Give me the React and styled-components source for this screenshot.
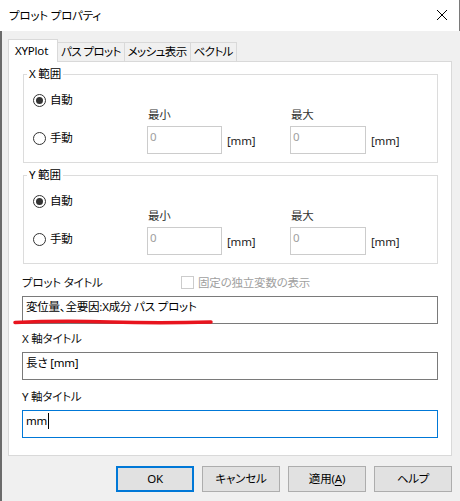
import styled, { createGlobalStyle } from 'styled-components';

const GlobalStyle = createGlobalStyle`
    html, body {
        margin: 0;
        padding: 0;
        background: #f0f0f0;
    }
    body {
        font-family: "Noto Sans", "Noto Sans CJK JP", sans-serif;
        font-size: 11.5px;
        letter-spacing: -0.2px;
        color: #000;
        font-feature-settings: "palt";
    }
    * {
        box-sizing: border-box;
    }
`;

const tabs = ['XYPlot', 'パス プロット', 'メッシュ表示', 'ベクトル'];
const buttons = [
    { label: 'OK', primary: true },
    { label: 'キャンセル' },
    { label: <>適用(<u>A</u>)</> },
    { label: 'ヘルプ' },
];

const Radio = ({ checked, children }) => (
    <RadioOption>
        <RadioCircle $checked={checked} />
        {children}
    </RadioOption>
);

const RangeGroup = ({ title }) => (
    <Group>
        <Legend>{title}</Legend>
        <RangeGrid>
            <Radio checked>自動</Radio>
            <MinMaxLabel $col={2}>最小</MinMaxLabel>
            <MinMaxLabel $col={4}>最大</MinMaxLabel>
            <ManualCell>
                <Radio>手動</Radio>
            </ManualCell>
            <NumberBox>0</NumberBox>
            <Unit>[mm]</Unit>
            <NumberBox>0</NumberBox>
            <Unit>[mm]</Unit>
        </RangeGrid>
    </Group>
);

const App = () => {
    return (
        <Window>
            <GlobalStyle />
            <TitleBar>
                <Title>プロット プロパティ</Title>
                <CloseButton>
                    <svg width="12" height="12" viewBox="0 0 12 12">
                        <path d="M1 1 L11 11 M11 1 L1 11" stroke="#000" strokeWidth="1" />
                    </svg>
                </CloseButton>
            </TitleBar>
            <Body>
                <TabStrip>
                    {tabs.map((t, i) => (
                        <Tab key={t} $active={i === 0}>{t}</Tab>
                    ))}
                </TabStrip>
                <Panel>
                    <RangeGroup title="X 範囲" />
                    <RangeGroup title="Y 範囲" />
                    <LabelRow>
                        <FieldLabel $wide>プロット タイトル</FieldLabel>
                        <CheckOption>
                            <CheckBox />
                            固定の独立変数の表示
                        </CheckOption>
                    </LabelRow>
                    <TextBox>変位量、全要因:X成分 パス プロット</TextBox>
                    <FieldLabel>X 軸タイトル</FieldLabel>
                    <TextBox>長さ [mm]</TextBox>
                    <FieldLabel $gap={9}>Y 軸タイトル</FieldLabel>
                    <TextBox $focused>
                        mm<Caret />
                    </TextBox>
                </Panel>
                <ButtonRow>
                    {buttons.map((b, i) => (
                        <Button key={i} $primary={b.primary}>{b.label}</Button>
                    ))}
                </ButtonRow>
            </Body>
            <Annotation width="460" height="501" viewBox="0 0 460 501">
                <path
                    d="M15 322.5 Q 60 320.5 110 322 T 211 322"
                    stroke="#e8141e"
                    strokeWidth="3.5"
                    fill="none"
                    strokeLinecap="round"
                />
            </Annotation>
        </Window>
    );
};

const Window = styled.div`
    position: relative;
    width: 460px;
    height: 501px;
    background: #f0f0f0;
    display: flex;
    flex-direction: column;
    overflow: hidden;
`;

const TitleBar = styled.div`
    height: 31px;
    background: #fff;
    display: flex;
    align-items: center;
    justify-content: space-between;
    padding: 0 11px 0 9px;
    border-right: 1px solid #7a7a7a;
`;

const Title = styled.div`
    line-height: 16px;
`;

const CloseButton = styled.div`
    width: 12px;
    height: 12px;
    display: flex;
    margin-top: -1px;
`;

const Body = styled.div`
    flex: 1;
    border-left: 2px solid #6b6b6b;
    padding: 8px 8px 0 6px;
    display: flex;
    flex-direction: column;
`;

const TabStrip = styled.div`
    display: flex;
    align-items: flex-end;
    height: 23px;
    margin-bottom: -1px;
`;

const Tab = styled.div`
    position: relative;
    z-index: ${p => (p.$active ? 1 : 0)};
    height: ${p => (p.$active ? '23px' : '19px')};
    margin-bottom: ${p => (p.$active ? '0' : '1px')};
    margin-left: ${p => (p.$active ? '0' : '-1px')};
    padding: 0 ${p => (p.$active ? '6px' : '3px')};
    min-width: ${p => (p.$active ? '50px' : '0')};
    display: flex;
    align-items: center;
    background: ${p => (p.$active ? '#fff' : '#f0f0f0')};
    border: 1px solid #d9d9d9;
    border-bottom: none;
    line-height: 16px;
    white-space: nowrap;
    letter-spacing: ${p => (p.$active ? '-0.2px' : '-0.6px')};
`;

const Panel = styled.div`
    height: 395px;
    background: #fff;
    border: 1px solid #d9d9d9;
    padding: 4px 13px 15px 13px;
    display: flex;
    flex-direction: column;
`;

const Group = styled.fieldset`
    margin: 0 0 0 1px;
    padding: 10px 8px 8px 9px;
    border: 1px solid #dcdcdc;
    min-width: 0;

    & + & {
        margin-top: 4px;
    }
`;

const Legend = styled.legend`
    margin-left: -6px;
    padding: 0 2px;
    line-height: 16px;
`;

const RangeGrid = styled.div`
    display: grid;
    grid-template-columns: 114px 75px 68px 76px auto;
    grid-template-rows: 16px 18px 28px;
`;

const RadioOption = styled.div`
    display: flex;
    align-items: center;
    gap: 4px;
    line-height: 16px;
    white-space: nowrap;
`;

const RadioCircle = styled.span`
    position: relative;
    width: 13px;
    height: 13px;
    border-radius: 50%;
    border: 1px solid #333;
    background: #fff;

    &::after {
        content: '';
        display: ${p => (p.$checked ? 'block' : 'none')};
        position: absolute;
        left: 2px;
        top: 2px;
        width: 7px;
        height: 7px;
        border-radius: 50%;
        background: #333;
    }
`;

const MinMaxLabel = styled.div`
    grid-row: 2;
    grid-column: ${p => p.$col};
    line-height: 14px;
    padding-left: 1px;
    color: #333;
`;

const ManualCell = styled.div`
    grid-row: 3;
    grid-column: 1;
    align-self: center;
    margin-bottom: 4px;
`;

const NumberBox = styled.div`
    grid-row: 3;
    height: 28px;
    border: 1px solid #cccccc;
    padding: 2px 2px 0;
    line-height: 16px;
    color: #a0a0a0;
    background: #fff;
`;

const Unit = styled.div`
    grid-row: 3;
    align-self: center;
    padding: 2px 0 0 5px;
    line-height: 16px;
    color: #222;
`;

const LabelRow = styled.div`
    display: flex;
    align-items: center;
    height: 16px;
    margin-top: 11px;
`;

const FieldLabel = styled.div`
    width: ${p => (p.$wide ? '159px' : 'auto')};
    margin-top: ${p => (p.$wide ? 0 : `${p.$gap || 7}px`)};
    line-height: 16px;
    white-space: nowrap;
    color: #111;
`;

const CheckOption = styled.div`
    display: flex;
    align-items: center;
    gap: 4px;
    color: #a0a0a0;
    line-height: 16px;
    white-space: nowrap;
`;

const CheckBox = styled.span`
    width: 13px;
    height: 13px;
    border: 1px solid #cccccc;
    background: #fff;
    margin-top: -1px;
`;

const TextBox = styled.div`
    margin-top: 5px;
    height: 28px;
    border: 1px solid ${p => (p.$focused ? '#0078d7' : '#7a7a7a')};
    padding: 2px 3px 0;
    line-height: 16px;
    display: flex;
    align-items: flex-start;
    white-space: nowrap;
    background: #fff;
`;

const Caret = styled.span`
    width: 1px;
    height: 16px;
    background: #000;
    margin-left: 1px;
`;

const ButtonRow = styled.div`
    display: flex;
    justify-content: flex-end;
    gap: 8px;
    margin-top: 10px;
`;

const Button = styled.div`
    width: 78px;
    height: 26px;
    display: flex;
    align-items: center;
    justify-content: center;
    background: #e1e1e1;
    border: ${p => (p.$primary ? '2px solid #0078d7' : '1px solid #adadad')};
    line-height: 16px;

    u {
        text-underline-offset: 2px;
    }
`;

const Annotation = styled.svg`
    position: absolute;
    left: 0;
    top: 0;
    pointer-events: none;
`;

export default App;
